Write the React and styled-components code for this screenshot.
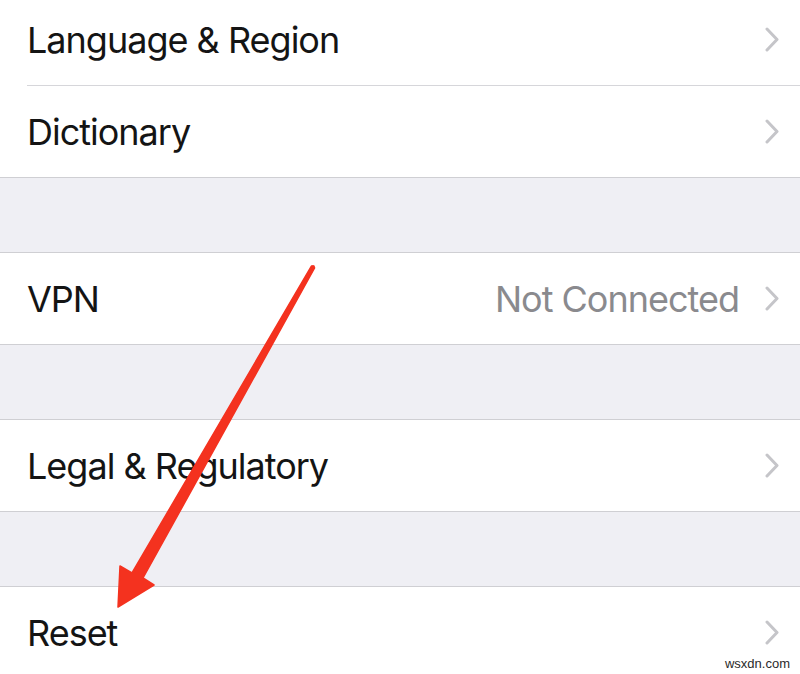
import React from "react";
import styled, { createGlobalStyle } from "styled-components";

const Global = createGlobalStyle`
  html, body { margin: 0; padding: 0; }
  body {
    background: #efeff4;
    font-family: Inter, "Noto Sans", "Liberation Sans", sans-serif;
    overflow: hidden;
  }
`;

const Page = styled.div`
  position: relative;
  width: 800px;
  height: 674px;
  overflow: hidden;
  background: #efeff4;
`;

const List = styled.div`
  display: flex;
  flex-direction: column;
  margin-top: -7px;
`;

const Group = styled.div`
  background: #ffffff;
  border-top: 1px solid #cfcfd3;
  border-bottom: 1px solid #cfcfd3;
`;

const Spacer = styled.div`
  height: 74px;
`;

const Row = styled.div`
  padding-left: 27px;
  & + & > div {
    border-top: 1px solid #d6d6da;
  }
`;

const RowInner = styled.div`
  display: flex;
  align-items: center;
  height: 91px;
  padding-right: 21px;
`;

const Label = styled.span`
  flex: 1;
  font-size: 36px;
  letter-spacing: -1px;
  color: #141414;
`;

const Value = styled.span`
  font-size: 36px;
  letter-spacing: -1px;
  color: #8a8a8e;
  margin-right: 26px;
`;

const Chevron = () => (
  <svg width="14" height="25" viewBox="0 0 14 25">
    <polyline
      points="2,2 12,12.5 2,23"
      fill="none"
      stroke="#c5c5c9"
      strokeWidth="3"
      strokeLinecap="round"
      strokeLinejoin="round"
    />
  </svg>
);

const Overlay = styled.svg`
  position: absolute;
  left: 0;
  top: 0;
  pointer-events: none;
`;

const Watermark = styled.span`
  position: absolute;
  right: 10px;
  bottom: 3px;
  font-family: "Liberation Sans", Arial, sans-serif;
  font-size: 13px;
  color: #2a2a2a;
`;

const SettingsRow = ({ label, value }) => (
  <Row>
    <RowInner>
      <Label>{label}</Label>
      {value && <Value>{value}</Value>}
      <Chevron />
    </RowInner>
  </Row>
);

export default function App() {
  return (
    <>
      <Global />
      <Page>
        <List>
          <Group>
            <SettingsRow label="Language & Region" />
            <SettingsRow label="Dictionary" />
          </Group>
          <Spacer />
          <Group>
            <SettingsRow label="VPN" value="Not Connected" />
          </Group>
          <Spacer />
          <Group>
            <SettingsRow label="Legal & Regulatory" />
          </Group>
          <Spacer />
          <Group>
            <SettingsRow label="Reset" />
          </Group>
        </List>
        <Overlay width="800" height="674" viewBox="0 0 800 674">
          <path
            d="M311.4 266.1 L314.6 267.9 L143 578 L154 585 L118 607 L120 566 L132 573 Z"
            fill="#f4321f"
            stroke="#f4321f"
            strokeWidth="1.5"
            strokeLinejoin="round"
          />
          <circle cx="313" cy="267" r="2" fill="#f4321f" />
        </Overlay>
        <Watermark>wsxdn.com</Watermark>
      </Page>
    </>
  );
}
